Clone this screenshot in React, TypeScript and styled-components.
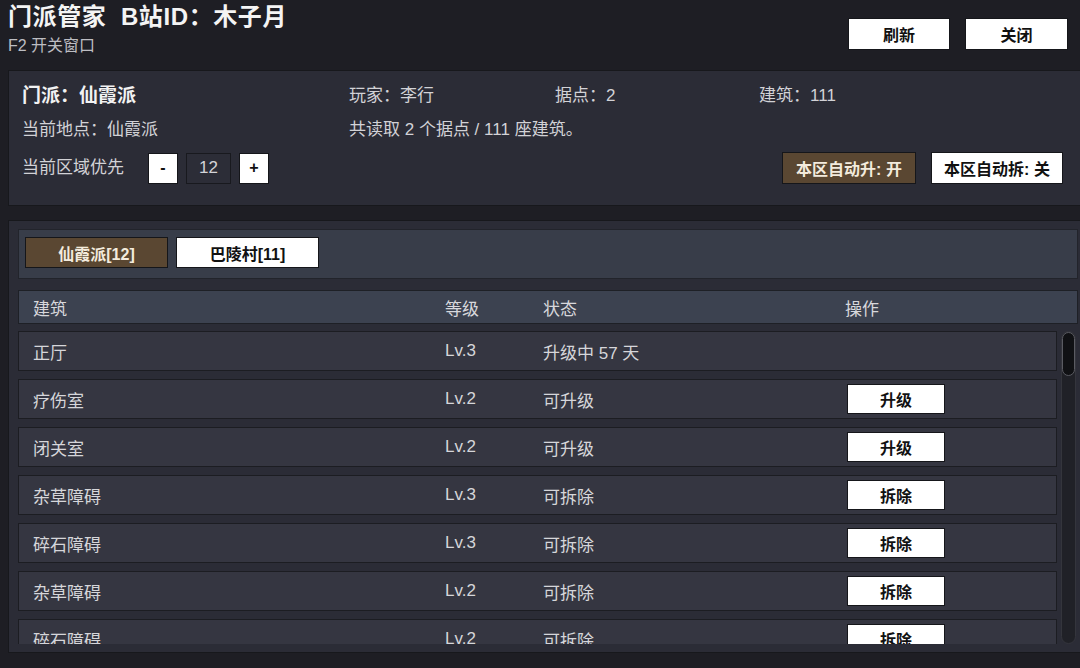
import styled, {createGlobalStyle} from "styled-components";

type Building = {
    name: string;
    level: number;
    status: string;
    action?: string;
};

const buildings: Building[] = [
    {name: "正厅", level: 3, status: "升级中 57 天"},
    {name: "疗伤室", level: 2, status: "可升级", action: "升级"},
    {name: "闭关室", level: 2, status: "可升级", action: "升级"},
    {name: "杂草障碍", level: 3, status: "可拆除", action: "拆除"},
    {name: "碎石障碍", level: 3, status: "可拆除", action: "拆除"},
    {name: "杂草障碍", level: 2, status: "可拆除", action: "拆除"},
    {name: "碎石障碍", level: 2, status: "可拆除", action: "拆除"},
    {name: "藏经阁", level: 2, status: "可升级", action: "升级"},
    {name: "练功房", level: 1, status: "可升级", action: "升级"},
    {name: "杂草障碍", level: 1, status: "可拆除", action: "拆除"},
    {name: "碎石障碍", level: 1, status: "可拆除", action: "拆除"},
    {name: "仓库", level: 1, status: "可升级", action: "升级"},
];

const GlobalStyle = createGlobalStyle`
    html, body {
        margin: 0;
        padding: 0;
        background: #1e1e24;
        overflow: hidden;
    }
    body {
        font-family: "Liberation Sans", "Noto Sans CJK SC", sans-serif;
        color: #d6d6d8;
    }
`

export default function App() {
    return (
        <>
            <GlobalStyle/>
            <Page>
                <TopBar>
                    <TitleBlock>
                        <Title>门派管家&nbsp;&nbsp;B站ID：木子月</Title>
                        <Subtitle>F2 开关窗口</Subtitle>
                    </TitleBlock>
                    <TopButtons>
                        <LightButton width={102} height={32}>刷新</LightButton>
                        <LightButton width={103} height={32}>关闭</LightButton>
                    </TopButtons>
                </TopBar>

                <InfoPanel>
                    <InfoGrid>
                        <SectName>门派：仙霞派</SectName>
                        <InfoText>玩家：李行</InfoText>
                        <InfoText>据点：2</InfoText>
                        <InfoText>建筑：111</InfoText>

                        <InfoText>当前地点：仙霞派</InfoText>
                        <Summary>共读取 2 个据点 / 111 座建筑。</Summary>
                    </InfoGrid>
                    <ControlRow>
                        <Stepper>
                            <InfoText>当前区域优先</InfoText>
                            <StepButton>-</StepButton>
                            <StepValue>12</StepValue>
                            <StepButton>+</StepButton>
                        </Stepper>
                        <ToggleGroup>
                            <ToggleButton active width={134}>本区自动升: 开</ToggleButton>
                            <ToggleButton width={132}>本区自动拆: 关</ToggleButton>
                        </ToggleGroup>
                    </ControlRow>
                </InfoPanel>

                <ListPanel>
                    <TabBar>
                        <Tab active>仙霞派[12]</Tab>
                        <Tab>巴陵村[11]</Tab>
                    </TabBar>

                    <HeaderRow>
                        <span>建筑</span>
                        <span>等级</span>
                        <span>状态</span>
                        <span>操作</span>
                    </HeaderRow>

                    <ListArea>
                        <Rows>
                            {buildings.map((b, index) => (
                                <Row key={index}>
                                    <span>{b.name}</span>
                                    <span>Lv.{b.level}</span>
                                    <span>{b.status}</span>
                                    <span>{b.action && <LightButton width={98} height={30}>{b.action}</LightButton>}</span>
                                </Row>
                            ))}
                        </Rows>
                        <ScrollTrack>
                            <ScrollThumb/>
                        </ScrollTrack>
                    </ListArea>
                </ListPanel>
            </Page>
        </>
    );
}

const Page = styled.div`
    width: 1080px;
    height: 668px;
    display: flex;
    flex-direction: column;
    overflow: hidden;
`

const TopBar = styled.header`
    height: 70px;
    display: flex;
    justify-content: space-between;
    align-items: flex-start;
    padding: 0 12px 0 8px;
    box-sizing: border-box;
`

const TitleBlock = styled.div`
    display: flex;
    flex-direction: column;
`

const Title = styled.h1`
    margin: 1px 0 0;
    font-size: 24px;
    line-height: 32px;
    font-weight: 700;
    color: #f4f4f4;
    letter-spacing: 0.6px;
`

const Subtitle = styled.div`
    font-size: 16px;
    line-height: 22px;
    margin-top: 2px;
    color: #bdbdc2;
`

const TopButtons = styled.div`
    display: flex;
    gap: 15px;
    margin-top: 18px;
`

const LightButton = styled.button<{width: number; height: number}>`
    width: ${({width}) => width}px;
    height: ${({height}) => height}px;
    padding: 0;
    background: #ffffff;
    border: 1px solid #15161a;
    color: #111;
    font-family: "Liberation Sans", "Noto Sans CJK SC", sans-serif;
    font-size: 16px;
    font-weight: 700;
    cursor: pointer;
`

const Panel = styled.section`
    margin-left: 8px;
    width: 1076px;
    box-sizing: border-box;
    border: 1px solid #17181c;
    background: #2b2c36;
`

const InfoPanel = styled(Panel)`
    height: 136px;
    padding: 14px 20px 0 13px;
    display: flex;
    flex-direction: column;
`

const InfoGrid = styled.div`
    display: grid;
    grid-template-columns: 327px 206px 204px 1fr;
    row-gap: 12px;
    align-items: center;
`

const InfoText = styled.span`
    font-size: 17px;
    line-height: 22px;
    color: #d2d2d6;
`

const Summary = styled(InfoText)`
    grid-column: 2 / 5;
`

const SectName = styled(InfoText)`
    font-size: 19px;
    font-weight: 700;
    color: #f2f2f2;
`

const ControlRow = styled.div`
    margin-top: 11px;
    display: flex;
    justify-content: space-between;
    align-items: center;
`

const Stepper = styled.div`
    display: flex;
    align-items: center;
    gap: 8px;

    & > span {
        margin-right: 16px;
    }
`

const StepButton = styled.button`
    width: 30px;
    height: 31px;
    padding: 0;
    background: #fff;
    border: 1px solid #15161a;
    color: #111;
    font-family: "Liberation Sans", sans-serif;
    font-size: 16px;
    font-weight: 700;
`

const StepValue = styled.div`
    width: 45px;
    height: 31px;
    box-sizing: border-box;
    border: 1px solid #18191e;
    background: #2c2d37;
    display: flex;
    align-items: center;
    justify-content: center;
    font-size: 17px;
    color: #d4d4d8;
`

const ToggleGroup = styled.div`
    display: flex;
    gap: 15px;
`

const ToggleButton = styled.button<{active?: boolean; width: number}>`
    width: ${({width}) => width}px;
    height: 32px;
    padding: 0;
    border: 1px solid #15161a;
    background: ${({active}) => active ? "#5a4732" : "#ffffff"};
    color: ${({active}) => active ? "#f3ebdd" : "#111"};
    font-family: "Liberation Sans", "Noto Sans CJK SC", sans-serif;
    font-size: 16px;
    font-weight: 700;
`

const ListPanel = styled(Panel)`
    margin-top: 14px;
    height: 433px;
    padding: 8px 5px 8px 9px;
    display: flex;
    flex-direction: column;
`

const TabBar = styled.div`
    height: 50px;
    box-sizing: border-box;
    border: 1px solid #22242b;
    background: #383d49;
    padding: 7px 6px;
    display: flex;
    gap: 8px;
`

const Tab = styled.button<{active?: boolean}>`
    width: 143px;
    height: 31px;
    padding: 0;
    border: 1px solid #15161a;
    background: ${({active}) => active ? "#5a4732" : "#ffffff"};
    color: ${({active}) => active ? "#f3ebdd" : "#111"};
    font-family: "Liberation Sans", "Noto Sans CJK SC", sans-serif;
    font-size: 16px;
    font-weight: 700;
`

const columns = `412px 98px 302px 1fr`

const HeaderRow = styled.div`
    margin-top: 11px;
    height: 34px;
    box-sizing: border-box;
    border: 1px solid #1e2026;
    background: #3c4250;
    display: grid;
    grid-template-columns: ${columns};
    align-items: center;
    padding-left: 14px;
    font-size: 17px;
    color: #d8d8dc;
`

const ListArea = styled.div`
    margin-top: 7px;
    flex: 1;
    min-height: 0;
    display: flex;
    gap: 4px;
`

const Rows = styled.div`
    flex: 1;
    overflow: hidden;
    display: flex;
    flex-direction: column;
    gap: 8px;
`

const Row = styled.div`
    flex-shrink: 0;
    height: 40px;
    box-sizing: border-box;
    border: 1px solid #1c1d22;
    background: #353641;
    display: grid;
    grid-template-columns: ${columns};
    align-items: center;
    padding-left: 14px;
    font-size: 17px;
    color: #d6d6da;

    & button {
        margin-left: 2px;
        display: block;
    }
`

const ScrollTrack = styled.div`
    width: 15px;
    flex-shrink: 0;
    border-radius: 8px;
    background: #202127;
    border: 1px solid #34353c;
    box-sizing: border-box;
    margin-right: 2px;
`

const ScrollThumb = styled.div`
    height: 44px;
    border-radius: 7px;
    background: #101114;
    border: 1px solid #5a5b62;
    box-sizing: border-box;
`
